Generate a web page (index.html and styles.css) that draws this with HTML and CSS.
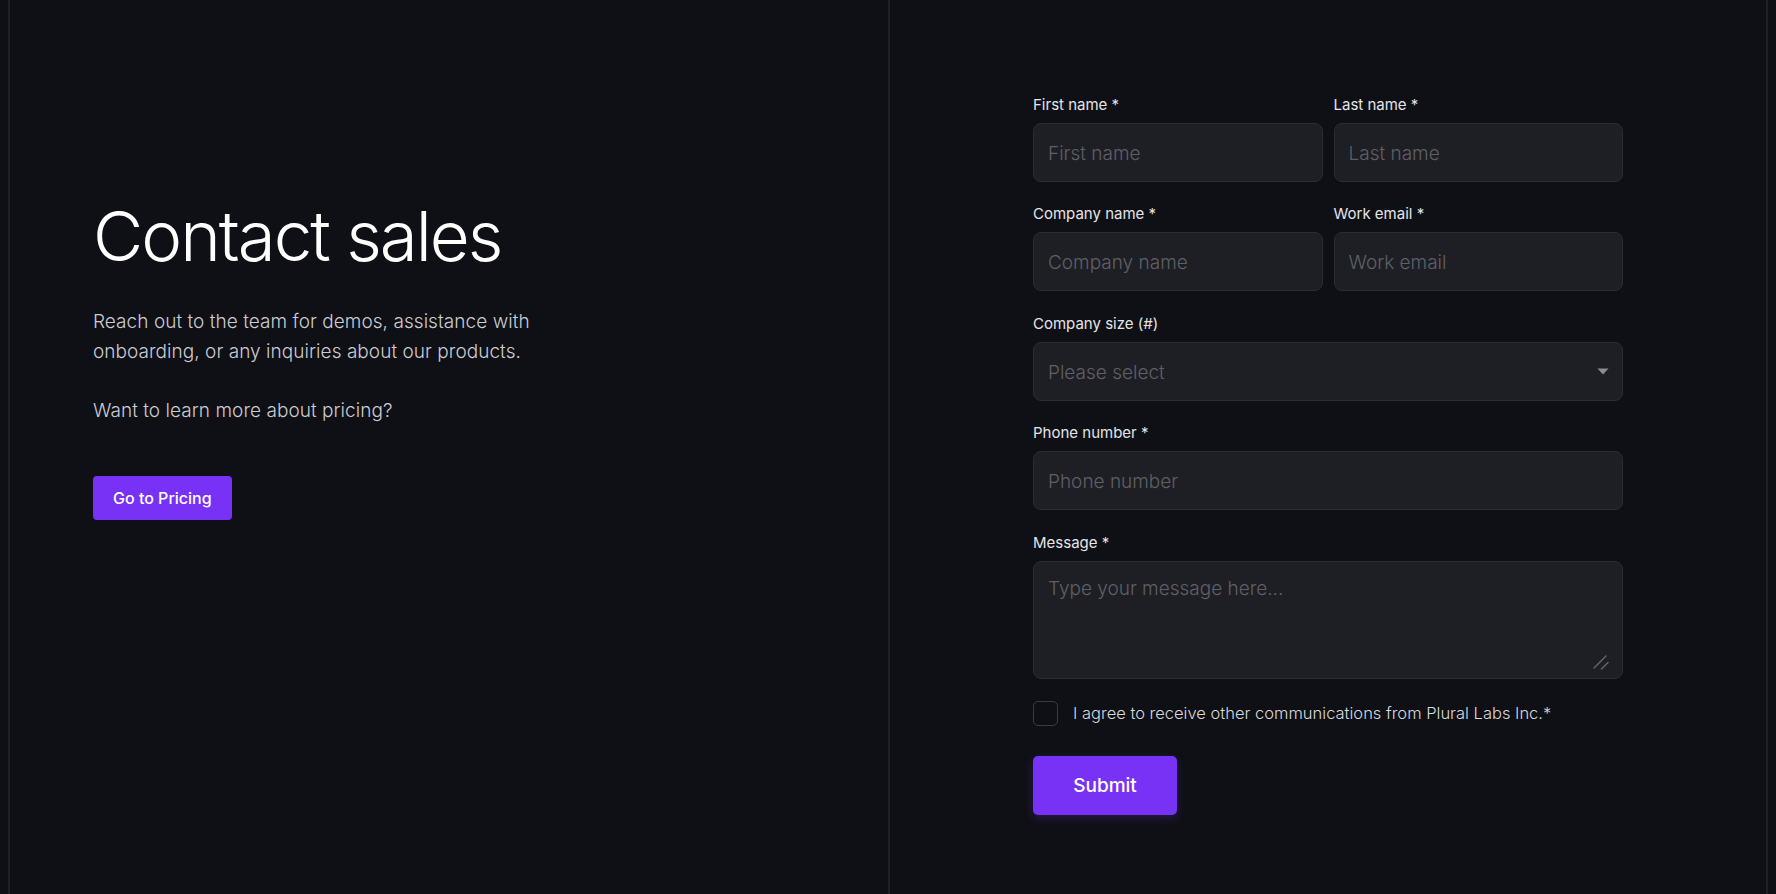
FILE: index.html
```html
<!DOCTYPE html>
<html lang="en">
<head>
<meta charset="utf-8">
<title>Contact sales</title>
<link rel="stylesheet" href="styles.css">
</head>
<body>
<div class="page">
  <section class="intro">
    <h1 class="intro-title">Contact sales</h1>
    <p class="intro-text">Reach out to the team for demos, assistance with onboarding, or any inquiries about our products.</p>
    <p class="intro-text">Want to learn more about pricing?</p>
    <a class="btn btn-small" href="#">Go to Pricing</a>
  </section>
  <section class="form-col">
    <form class="form">
      <div class="row-2">
        <label class="field">
          <span class="label">First name *</span>
          <input class="input" type="text" placeholder="First name">
        </label>
        <label class="field">
          <span class="label">Last name *</span>
          <input class="input" type="text" placeholder="Last name">
        </label>
      </div>
      <div class="row-2">
        <label class="field">
          <span class="label">Company name *</span>
          <input class="input" type="text" placeholder="Company name">
        </label>
        <label class="field">
          <span class="label">Work email *</span>
          <input class="input" type="email" placeholder="Work email">
        </label>
      </div>
      <label class="field">
        <span class="label">Company size (#)</span>
        <span class="control-wrap">
          <select class="input select">
            <option>Please select</option>
          </select>
          <svg class="select-arrow" width="12" height="7" viewBox="0 0 12 7"><path d="M0.5 0.5 H11.5 L6 6.5 Z" fill="#8b8c92"/></svg>
        </span>
      </label>
      <label class="field">
        <span class="label">Phone number *</span>
        <input class="input" type="tel" placeholder="Phone number">
      </label>
      <label class="field">
        <span class="label">Message *</span>
        <span class="control-wrap">
          <textarea class="input textarea" placeholder="Type your message here..."></textarea>
          <svg class="resize-handle" width="16" height="16" viewBox="0 0 16 16"><path d="M1 14 L13 2 M8.5 15 L15 8.5" stroke="#66676e" stroke-width="1.4" stroke-linecap="round" fill="none"/></svg>
        </span>
      </label>
      <label class="check">
        <input class="checkbox" type="checkbox">
        <span class="check-text">I agree to receive other communications from Plural Labs Inc.*</span>
      </label>
      <div class="actions">
        <button class="btn btn-submit" type="button">Submit</button>
      </div>
    </form>
  </section>
</div>
</body>
</html>
```

FILE: styles.css
```css
* { box-sizing: border-box; }
html, body {
  margin: 0;
  padding: 0;
  background: #0f1015;
  color-scheme: dark;
}
body {
  font-family: Inter, "Noto Sans", "Liberation Sans", sans-serif;
  color: #e6e6ea;
  height: 894px;
  overflow: hidden;
}
.page {
  margin: 0 8px;
  height: 894px;
  display: grid;
  grid-template-columns: 1fr 1fr;
  border-left: 2px solid #1f2026;
  border-right: 2px solid #1f2026;
}
.intro {
  padding: 197px 0 0 83px;
}
.intro-title {
  margin: 0 0 31px;
  font-size: 69px;
  line-height: 79px;
  font-weight: 300;
  color: #ffffff;
  letter-spacing: -2px;
}
.intro-text {
  margin: 0 0 30px;
  width: 480px;
  font-size: 19px;
  line-height: 29.5px;
  font-weight: 300;
  color: #cbccd1;
  letter-spacing: 0.05px;
}
.intro-text + .intro-text { margin-bottom: 50px; }
.btn {
  display: inline-flex;
  align-items: center;
  justify-content: center;
  background: #7732f6;
  color: #ffffff;
  border: none;
  text-decoration: none;
  font-family: inherit;
  font-weight: 500;
  cursor: pointer;
}
.btn-small {
  height: 44px;
  padding: 0 20px;
  border-radius: 4px;
  font-size: 16px;
}
.form-col {
  border-left: 2px solid #1f2026;
  display: flex;
  justify-content: center;
  padding-top: 95px;
}
.form {
  width: 590px;
  display: flex;
  flex-direction: column;
  gap: 22.4px;
}
.row-2 {
  display: grid;
  grid-template-columns: 1fr 1fr;
  gap: 11px;
}
.field {
  display: flex;
  flex-direction: column;
  gap: 8px;
}
.label {
  font-size: 15px;
  line-height: 20px;
  color: #e4e4e8;
  font-weight: 400;
}
.input {
  display: block;
  height: 59px;
  width: 100%;
  background: #1e1f24;
  border: 1px solid #2c2d33;
  border-radius: 8px;
  padding: 2px 14px 0;
  font-family: inherit;
  font-size: 19px;
  font-weight: 300;
  color: #e6e6ea;
  outline: none;
}
.input::placeholder { color: #5e5f67; }
.control-wrap {
  position: relative;
  display: block;
}
.select {
  appearance: none;
  -webkit-appearance: none;
  color: #5e5f67;
}
.select-arrow {
  position: absolute;
  right: 14px;
  top: 26px;
}
.textarea {
  height: 118px;
  padding: 14px 14px;
  resize: none;
  line-height: 26px;
}
.resize-handle {
  position: absolute;
  right: 14px;
  bottom: 9px;
}
.check {
  display: flex;
  align-items: center;
  gap: 15px;
}
.checkbox {
  appearance: none;
  -webkit-appearance: none;
  margin: 0;
  width: 25px;
  height: 25px;
  border: 1.5px solid #3a3b42;
  border-radius: 5px;
  background: transparent;
}
.check-text {
  font-size: 16.5px;
  font-weight: 300;
  color: #d8d8dd;
}
.actions {
  padding-top: 8px;
}
.btn-submit {
  width: 144px;
  height: 59px;
  border-radius: 5px;
  font-size: 19px;
  box-shadow: 0 3px 10px rgba(119, 50, 246, 0.25);
}
```
